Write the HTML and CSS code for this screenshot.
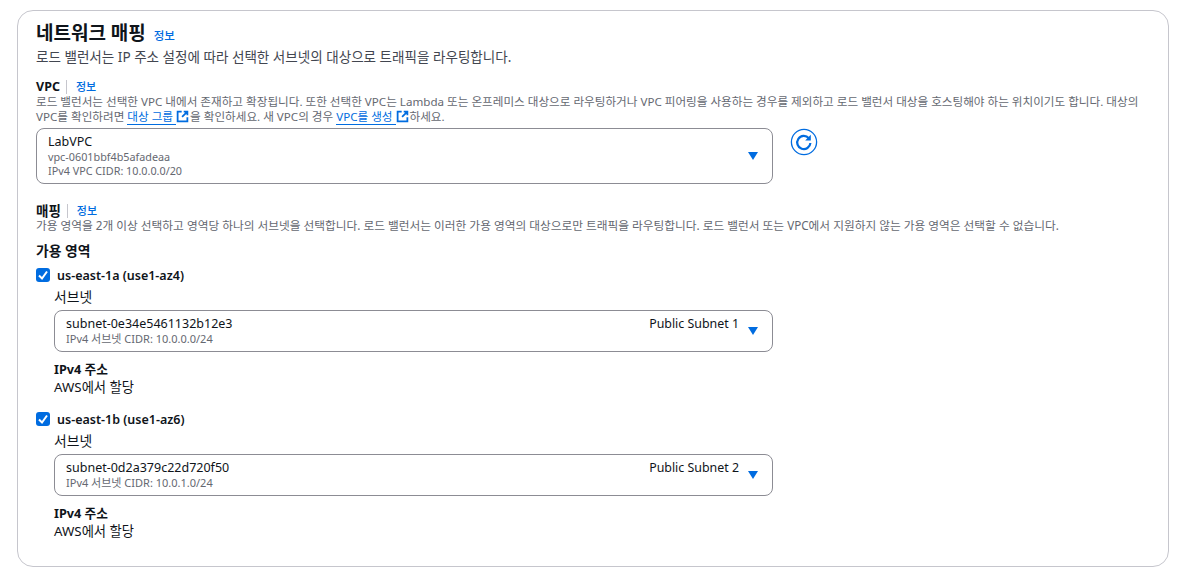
FILE: index.html
```html
<!DOCTYPE html>
<html lang="ko">
<head>
<meta charset="utf-8">
<title>네트워크 매핑</title>
<link rel="stylesheet" href="styles.css">
</head>
<body>
<section class="card">
  <header class="head">
    <h2 class="title">네트워크 매핑 <a class="info">정보</a></h2>
    <p class="lead">로드 밸런서는 IP 주소 설정에 따라 선택한 서브넷의 대상으로 트래픽을 라우팅합니다.</p>
  </header>

  <div class="field vpc">
    <div class="label-row"><span class="label">VPC</span><a class="info">정보</a></div>
    <p class="hint">로드 밸런서는 선택한 VPC 내에서 존재하고 확장됩니다. 또한 선택한 VPC는 Lambda 또는 온프레미스 대상으로 라우팅하거나 VPC 피어링을 사용하는 경우를 제외하고 로드 밸런서 대상을 호스팅해야 하는 위치이기도 합니다. 대상의<br>VPC를 확인하려면 <a class="link">대상 그룹 </a><svg class="ext" viewBox="0 0 16 16"><path d="M7 2H2v12h12V9M9.5 2H14v4.5M14 2 7.5 8.5"/></svg>을 확인하세요. 새 VPC의 경우 <a class="link">VPC를 생성 </a><svg class="ext" viewBox="0 0 16 16"><path d="M7 2H2v12h12V9M9.5 2H14v4.5M14 2 7.5 8.5"/></svg>하세요.</p>
    <div class="select-row">
      <div class="select tall">
        <div class="select-text">
          <div class="main">LabVPC</div>
          <div class="sub">vpc-0601bbf4b5afadeaa</div>
          <div class="sub">IPv4 VPC CIDR: 10.0.0.0/20</div>
        </div>
        <svg class="caret" viewBox="0 0 12 10"><path d="M1 1h10L6 9z"/></svg>
      </div>
      <svg class="refresh" viewBox="0 0 28 28"><circle cx="14" cy="14" r="12.6"/><path class="arc" d="M18.8 10.2A6.6 6.6 0 1 0 20.4 15"/><path class="head-arrow" d="M20.8 6.8v5.6h-5.6z"/></svg>
    </div>
  </div>

  <div class="field mapping">
    <div class="label-row"><span class="label">매핑</span><a class="info">정보</a></div>
    <p class="hint">가용 영역을 2개 이상 선택하고 영역당 하나의 서브넷을 선택합니다. 로드 밸런서는 이러한 가용 영역의 대상으로만 트래픽을 라우팅합니다. 로드 밸런서 또는 VPC에서 지원하지 않는 가용 영역은 선택할 수 없습니다.</p>
  </div>

  <h3 class="zones">가용 영역</h3>

  <div class="zone">
    <div class="check-row"><span class="check"><svg viewBox="0 0 14 14"><path d="M3 7.5 6 10.5 11 3.5"/></svg></span><span class="zone-name">us-east-1a (use1-az4)</span></div>
    <div class="zone-body">
      <div class="sub-label">서브넷</div>
      <div class="select short">
        <div class="select-text">
          <div class="main">subnet-0e34e5461132b12e3</div>
          <div class="sub">IPv4 서브넷 CIDR: 10.0.0.0/24</div>
        </div>
        <div class="tag">Public Subnet 1</div>
        <svg class="caret" viewBox="0 0 12 10"><path d="M1 1h10L6 9z"/></svg>
      </div>
      <div class="addr-label">IPv4 주소</div>
      <div class="addr">AWS에서 할당</div>
    </div>
  </div>

  <div class="zone">
    <div class="check-row"><span class="check"><svg viewBox="0 0 14 14"><path d="M3 7.5 6 10.5 11 3.5"/></svg></span><span class="zone-name">us-east-1b (use1-az6)</span></div>
    <div class="zone-body">
      <div class="sub-label">서브넷</div>
      <div class="select short">
        <div class="select-text">
          <div class="main">subnet-0d2a379c22d720f50</div>
          <div class="sub">IPv4 서브넷 CIDR: 10.0.1.0/24</div>
        </div>
        <div class="tag">Public Subnet 2</div>
        <svg class="caret" viewBox="0 0 12 10"><path d="M1 1h10L6 9z"/></svg>
      </div>
      <div class="addr-label">IPv4 주소</div>
      <div class="addr">AWS에서 할당</div>
    </div>
  </div>
</section>
</body>
</html>
```

FILE: styles.css
```css
* { box-sizing: border-box; }
html, body { margin: 0; padding: 0; background: #fff; }
body {
  width: 1182px;
  height: 573px;
  overflow: hidden;
  padding: 10px 13px 6px 17px;
  font-family: "Noto Sans", "Noto Sans CJK KR", sans-serif;
  color: #0f141a;
  font-size: 14px;
}
.card {
  height: 557px;
  border: 1px solid #c6c6cd;
  border-radius: 16px;
  padding: 10px 18px 0;
}
.title {
  margin: 0;
  font-size: 19px;
  font-weight: 700;
  line-height: 24px;
}
.info { color: #006ce0; font-size: 12px; font-weight: 500; }
.title .info { margin-left: 3px; font-size: 11.5px; font-weight: 500; }
.lead { margin: 0; font-size: 13.56px; line-height: 18px; color: #424650; white-space: nowrap; }
.field.vpc { margin-top: 14px; }
.label-row { display: flex; align-items: center; height: 14px; }
.label { font-size: 12.5px; font-weight: 700; line-height: 14px; }
.mapping .label { font-size: 13.5px; }
.label-row .info { margin-left: 6px; padding-left: 9px; border-left: 1px solid #c6c6cd; line-height: 14px; font-size: 11px; }
.hint { margin: 0; font-size: 11.6px; line-height: 15px; color: #656871; white-space: nowrap; }
.mapping .hint { font-size: 11.7px; }
.link { color: #006ce0; border-bottom: 1px solid #006ce0; }
.ext { width: 13px; height: 13px; vertical-align: -2px; fill: none; stroke: #006ce0; stroke-width: 2.2; margin-right: 1px; }
.select-row { display: flex; align-items: flex-start; margin-top: 4px; }
.select {
  display: flex;
  align-items: flex-start;
  width: 737px;
  border: 1px solid #8c8c94;
  border-radius: 8px;
  position: relative;
}
.select.tall { height: 56px; padding: 4px 11px; }
.select.short { height: 42px; padding: 4px 11px; }
.select-text { flex: 1; }
.main { font-size: 12.5px; line-height: 17px; color: #0f141a; }
.sub { font-size: 10.8px; line-height: 14px; color: #656871; }
.short .sub { font-size: 11px; }
.tag { font-size: 12.4px; line-height: 17px; margin-right: 22px; }
.caret { position: absolute; right: 13px; width: 12px; height: 10px; fill: #006ce0; }
.tall .caret { top: 22px; }
.short .caret { top: 15px; }
.refresh { width: 28px; height: 28px; margin-left: 17px; flex: none; fill: none; stroke: #006ce0; }
.refresh circle { stroke-width: 1.3; }
.refresh .arc { stroke-width: 2.2; }
.refresh .head-arrow { fill: #006ce0; stroke: none; }
.field.mapping { margin-top: 20px; }
.zones { margin: 9px 0 0; font-size: 13.8px; font-weight: 700; line-height: 18px; }
.zone { margin-top: 7px; }
.zone + .zone { margin-top: 15px; }
.check-row { display: flex; align-items: center; height: 16px; }
.check { width: 14px; height: 14px; border-radius: 3px; background: #006ce0; display: flex; }
.check svg { width: 14px; height: 14px; fill: none; stroke: #fff; stroke-width: 2; }
.zone-name { margin-left: 7px; font-size: 12.5px; font-weight: 600; }
.zone-body { padding-left: 18px; }
.sub-label { margin-top: 5px; font-size: 13.8px; line-height: 18px; }
.zone-body .select { margin-top: 4px; width: 719px; }
.addr-label { margin-top: 8px; font-size: 12.7px; font-weight: 700; line-height: 18px; }
.addr { font-size: 13.3px; line-height: 18px; }
```
